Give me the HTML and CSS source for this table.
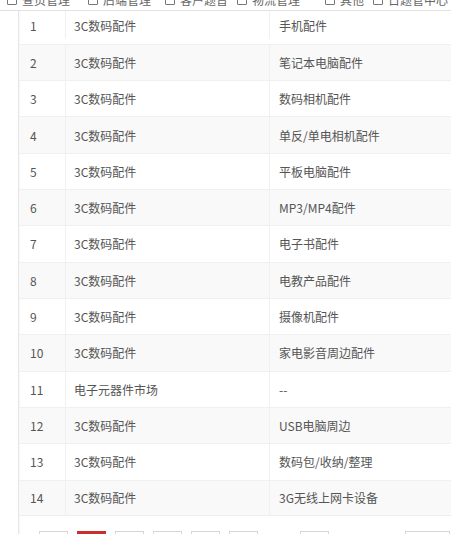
FILE: index.html
```html
<!DOCTYPE html>
<html lang="zh-CN">
<head>
<meta charset="utf-8">
<title>分类列表</title>
<link rel="stylesheet" href="styles.css">
</head>
<body>
<div class="topbar">
  <div class="tabs">
    <span class="tab tab-1"><i class="box"></i>查页管理</span>
    <span class="tab tab-2"><i class="box"></i>后端管理</span>
    <span class="tab tab-3"><i class="box"></i>客户题普</span>
    <span class="tab tab-4"><i class="box"></i>物流管理</span>
    <span class="tab tab-5"><i class="box"></i>其他</span>
    <span class="tab tab-6"><i class="box"></i>日题管中心</span>
  </div>
</div>
<div class="main">
  <div class="gutter"></div>
  <div class="content">
    <div class="table">
      <div class="row first"><div class="c c1">1</div><div class="c c2">3C数码配件</div><div class="c c3">手机配件</div></div>
      <div class="row"><div class="c c1">2</div><div class="c c2">3C数码配件</div><div class="c c3">笔记本电脑配件</div></div>
      <div class="row"><div class="c c1">3</div><div class="c c2">3C数码配件</div><div class="c c3">数码相机配件</div></div>
      <div class="row"><div class="c c1">4</div><div class="c c2">3C数码配件</div><div class="c c3">单反/单电相机配件</div></div>
      <div class="row"><div class="c c1">5</div><div class="c c2">3C数码配件</div><div class="c c3">平板电脑配件</div></div>
      <div class="row"><div class="c c1">6</div><div class="c c2">3C数码配件</div><div class="c c3">MP3/MP4配件</div></div>
      <div class="row"><div class="c c1">7</div><div class="c c2">3C数码配件</div><div class="c c3">电子书配件</div></div>
      <div class="row"><div class="c c1">8</div><div class="c c2">3C数码配件</div><div class="c c3">电教产品配件</div></div>
      <div class="row"><div class="c c1">9</div><div class="c c2">3C数码配件</div><div class="c c3">摄像机配件</div></div>
      <div class="row"><div class="c c1">10</div><div class="c c2">3C数码配件</div><div class="c c3">家电影音周边配件</div></div>
      <div class="row"><div class="c c1">11</div><div class="c c2">电子元器件市场</div><div class="c c3">--</div></div>
      <div class="row"><div class="c c1">12</div><div class="c c2">3C数码配件</div><div class="c c3">USB电脑周边</div></div>
      <div class="row"><div class="c c1">13</div><div class="c c2">3C数码配件</div><div class="c c3">数码包/收纳/整理</div></div>
      <div class="row"><div class="c c1">14</div><div class="c c2">3C数码配件</div><div class="c c3">3G无线上网卡设备</div></div>
    </div>
    <div class="pager">
      <span class="pg">«</span>
      <span class="pg active">1</span>
      <span class="pg">2</span>
      <span class="pg">3</span>
      <span class="pg">4</span>
      <span class="pg">5</span>
      <span class="dots">…</span>
      <span class="pg">20</span>
      <span class="pg wide">下一页</span>
    </div>
  </div>
</div>
</body>
</html>
```
FILE: styles.css
```css
html, body {
  margin: 0;
  padding: 0;
  background: #ffffff;
  overflow: hidden;
}
body {
  width: 451px;
  height: 534px;
  font-family: "Noto Sans CJK SC", "Noto Sans", "Liberation Sans", sans-serif;
  font-size: 12px;
  color: #555;
}
.topbar {
  height: 10px;
  border-bottom: 1px solid #e2e2e2;
  overflow: hidden;
  background: #fff;
}
.tabs {
  display: flex;
  align-items: center;
  margin-top: -8px;
  padding-left: 7px;
  height: 16px;
  color: #666;
  font-size: 12px;
  line-height: 16px;
}
.tab {
  display: flex;
  align-items: center;
  gap: 5px;
  white-space: nowrap;
  flex: none;
}
.box {
  display: inline-block;
  width: 8px;
  height: 8px;
  border: 1px solid #777;
  border-radius: 1px;
}
.tab-1 { width: 81px; }
.tab-2 { width: 77px; }
.tab-3 { width: 72px; }
.tab-4 { width: 88px; }
.tab-5 { width: 48px; }

.main {
  display: flex;
}
.gutter {
  width: 18px;
  flex: none;
  border-right: 1px solid #e6e6e6;
  box-shadow: 1px 0 2px rgba(0,0,0,0.04);
}
.content {
  flex: 1;
  min-width: 0;
}
.table {
  display: flex;
  flex-direction: column;
}
.row {
  display: grid;
  grid-template-columns: 47px 204px 1fr;
  height: 36.33px;
  box-sizing: border-box;
  border-top: 1px solid #f0f0f0;
}
.row:nth-child(even) {
  background: #f9f9f9;
}
.row.first {
  height: 32.7px;
  border-top: none;
  padding-bottom: 4.5px;
}
.row:last-child {
  border-bottom: 1px solid #eeeeee;
}
.c {
  display: flex;
  align-items: center;
  white-space: nowrap;
}
.c1 {
  padding-left: 11px;
  border-right: 1px solid #f0f0f0;
}
.c2 {
  padding-left: 8px;
  border-right: 1px solid #f0f0f0;
}
.c3 {
  padding-left: 9px;
}
.pager {
  display: flex;
  align-items: flex-start;
  padding-left: 20px;
  margin-top: 15px;
  gap: 9px;
}
.pg {
  display: flex;
  align-items: center;
  justify-content: center;
  width: 29px;
  height: 24px;
  box-sizing: border-box;
  border: 1px solid #d6d6d6;
  background: #fff;
  color: #555;
  flex: none;
}
.pg.active {
  background: #c9302c;
  border-color: #c9302c;
  color: #fff;
}
.dots {
  width: 24px;
  flex: none;
}
.pg.wide {
  width: 45px;
  margin-left: 67px;
}
```
